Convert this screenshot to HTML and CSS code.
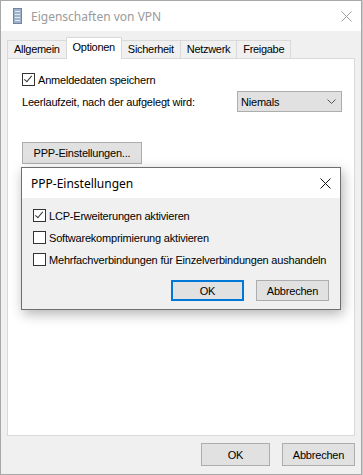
FILE: index.html
```html
<!DOCTYPE html>
<html lang="de">
<head>
    <meta charset="UTF-8">
    <meta name="viewport" content="width=device-width, initial-scale=1.0">
    <title>Eigenschaften von VPN</title>
    <link rel="stylesheet" href="styles.css">
</head>
<body>

    <div class="window">
        <div class="titlebar">
            <svg class="app-icon" width="9" height="16" viewBox="0 0 9 16">
                <rect x="0.5" y="0.5" width="8" height="15" fill="#9fb2cc" stroke="#6d84a3"/>
                <rect x="2" y="3" width="5" height="1" fill="#e4eaf3"/>
                <rect x="2" y="6" width="5" height="1" fill="#e4eaf3"/>
                <rect x="2" y="9" width="5" height="1" fill="#e4eaf3"/>
                <rect x="2" y="12" width="5" height="1" fill="#e4eaf3"/>
            </svg>
            <span class="title">Eigenschaften von VPN</span>
            <svg class="close" width="11" height="11" viewBox="0 0 11 11">
                <path d="M0.5 0.5 L10.5 10.5 M10.5 0.5 L0.5 10.5" stroke="#a0a0a0" stroke-width="1"/>
            </svg>
        </div>

        <div class="content">
            <div class="tabs">
                <div class="tab">Allgemein</div>
                <div class="tab active">Optionen</div>
                <div class="tab">Sicherheit</div>
                <div class="tab">Netzwerk</div>
                <div class="tab">Freigabe</div>
            </div>

            <div class="panel">
                <label class="check-row">
                    <span class="checkbox checked"></span>
                    Anmeldedaten speichern
                </label>
                <div class="idle-row">
                    <span>Leerlaufzeit, nach der aufgelegt wird:</span>
                    <div class="combo">
                        <span>Niemals</span>
                        <svg width="9" height="5" viewBox="0 0 9 5">
                            <path d="M0.5 0.5 L4.5 4.5 L8.5 0.5" fill="none" stroke="#555" stroke-width="1"/>
                        </svg>
                    </div>
                </div>
                <button class="button ppp-button">PPP-Einstellungen...</button>
            </div>

            <div class="footer">
                <button class="button">OK</button>
                <button class="button">Abbrechen</button>
            </div>
        </div>

        <div class="dialog">
            <div class="dialog-title">
                <span>PPP-Einstellungen</span>
                <svg class="dialog-close" width="11" height="11" viewBox="0 0 11 11">
                    <path d="M0.5 0.5 L10.5 10.5 M10.5 0.5 L0.5 10.5" stroke="#111" stroke-width="1"/>
                </svg>
            </div>
            <div class="dialog-body">
                <label class="check-row">
                    <span class="checkbox checked"></span>
                    LCP-Erweiterungen aktivieren
                </label>
                <label class="check-row">
                    <span class="checkbox"></span>
                    Softwarekomprimierung aktivieren
                </label>
                <label class="check-row">
                    <span class="checkbox"></span>
                    Mehrfachverbindungen für Einzelverbindungen aushandeln
                </label>
                <div class="dialog-buttons">
                    <button class="button default">OK</button>
                    <button class="button">Abbrechen</button>
                </div>
            </div>
        </div>
    </div>

</body>
</html>
```

FILE: styles.css
```css
body {
    margin: 0;
    background: #c9c9c9;
    font-family: "Liberation Sans", Arial, sans-serif;
    font-size: 11px;
    letter-spacing: -0.2px;
    color: #000;
}
.window {
    position: relative;
    width: 362px;
    height: 475px;
    box-sizing: border-box;
    border: 1px solid #a8a8a8;
    background: #f0f0f0;
    display: flex;
    flex-direction: column;
}
.titlebar {
    height: 30px;
    background: #fff;
    display: flex;
    align-items: center;
    padding-left: 12px;
    padding-right: 9px;
}
.app-icon {
    margin-right: 9px;
}
.title {
    flex: 1;
    font-family: "Noto Sans", sans-serif;
    font-size: 12px;
    letter-spacing: 0;
    color: #9a9a9a;
}
.content {
    flex: 1;
    display: flex;
    flex-direction: column;
    padding: 7px 6px 8px 6px;
}
.tabs {
    display: flex;
    align-items: flex-end;
    height: 20px;
}
.tab {
    height: 17px;
    line-height: 16px;
    padding: 0 6px;
    border: 1px solid #d9d9d9;
    border-bottom: none;
    margin-right: -1px;
    background: #f0f0f0;
    white-space: nowrap;
    letter-spacing: -0.3px;
}
.tab.active {
    position: relative;
    height: 21px;
    line-height: 18px;
    margin-bottom: -1px;
    background: #fff;
    z-index: 1;
}
.panel {
    flex: 1;
    background: #fff;
    border: 1px solid #d9d9d9;
    padding: 14px 12px 0 14px;
    display: flex;
    flex-direction: column;
    align-items: flex-start;
}
.check-row {
    display: flex;
    align-items: center;
    height: 13px;
    gap: 3px;
    white-space: nowrap;
}
.checkbox {
    width: 11px;
    height: 11px;
    border: 1px solid #333;
    background: #fff;
    position: relative;
    flex: none;
}
.checkbox.checked::after {
    content: "";
    position: absolute;
    left: 3px;
    top: 0px;
    width: 3px;
    height: 7px;
    border-right: 1px solid #333;
    border-bottom: 1px solid #333;
    transform: rotate(40deg);
}
.idle-row {
    align-self: stretch;
    display: flex;
    align-items: center;
    justify-content: space-between;
    margin-top: 5px;
}
.combo {
    box-sizing: border-box;
    width: 105px;
    height: 21px;
    border: 1px solid #adadad;
    background: #e1e1e1;
    display: flex;
    align-items: center;
    justify-content: space-between;
    padding: 0 5px 0 3px;
}
.button {
    font-family: "Liberation Sans", Arial, sans-serif;
    font-size: 11px;
    letter-spacing: -0.2px;
    color: #000;
    background: #e1e1e1;
    border: 1px solid #adadad;
    padding: 0;
    margin: 0;
    height: 23px;
    width: 69px;
}
.ppp-button {
    width: 120px;
    height: 22px;
    margin-top: 30px;
}
.footer {
    display: flex;
    justify-content: flex-end;
    gap: 12px;
    margin-top: 7px;
}
.footer .button:last-child {
    width: 73px;
}
.dialog {
    position: absolute;
    left: 20px;
    top: 166px;
    width: 318px;
    border: 1px solid #6f6f6f;
    background: #f0f0f0;
    box-shadow: 2px 4px 12px rgba(0, 0, 0, 0.3);
}
.dialog-title {
    height: 30px;
    background: #fff;
    display: flex;
    align-items: center;
    justify-content: space-between;
    padding: 0 9px 0 9px;
    font-family: "Noto Sans", sans-serif;
    font-size: 12px;
    letter-spacing: 0;
}
.dialog-body {
    padding: 11px 11px 8px 11px;
    display: flex;
    flex-direction: column;
    gap: 9px;
}
.dialog-buttons {
    display: flex;
    justify-content: flex-end;
    gap: 12px;
    margin-top: 5px;
}
.dialog-buttons .button {
    width: 73px;
    height: 21px;
}
.button.default {
    border: 2px solid #0078d7;
}
```
